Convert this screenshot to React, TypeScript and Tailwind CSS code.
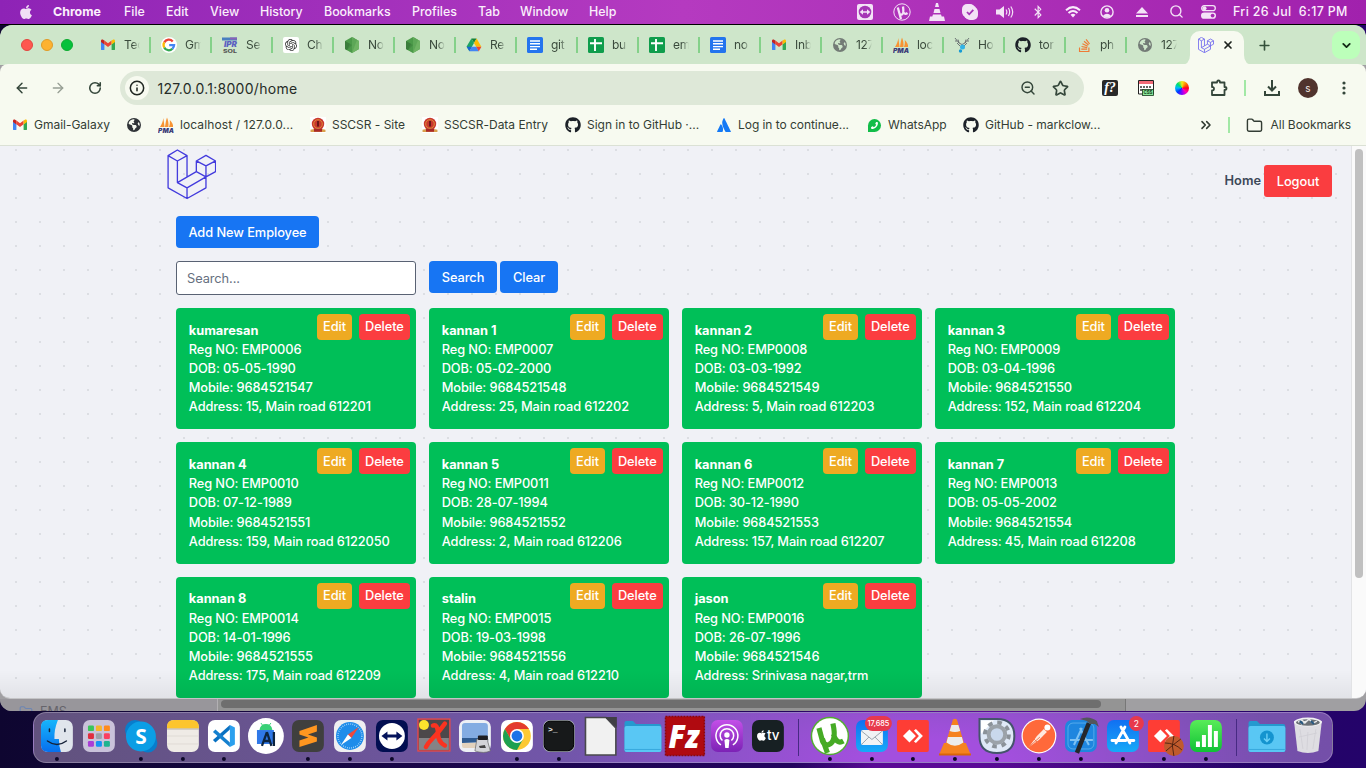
import React from "react";
import {
  FaApple,
  FaBluetoothB,
  FaGithub,
  FaPhoneAlt,
  FaStackOverflow,
  FaAtlassian,
} from "react-icons/fa";
import { FaEarthAmericas } from "react-icons/fa6";
import { SiOpenai } from "react-icons/si";
import {
  ArrowLeft,
  ArrowRight,
  RotateCw,
  Info,
  ZoomOut,
  Star,
  ChevronDown,
  Plus,
  X,
  ChevronsRight,
  Folder,
  Search,
} from "lucide-react";

/* ---------- shared glyphs ---------- */

const Laravel = ({ className, sw = 3 }: { className: string; sw?: number }) => (
  <svg viewBox="500 26 149 152" className={className} fill="none" stroke="currentColor" strokeWidth={sw} strokeLinejoin="round">
    <path d="M503 46 531 29 560 46 531 62ZM503 46V143L560 175 617 143V110M531 62V127L560 143V175M560 46V110M531 127 588 94 617 110 560 143M588 62 617 45 646 62 617 77ZM588 62V94M646 62V94L617 110V77" />
  </svg>
);

const Gmail = () => (
  <svg viewBox="0 0 16 16" className="size-4">
    <path d="M1 4.2V12.2a.9.9 0 0 0 .9.9H4.4V7Z" fill="#4285f4" />
    <path d="M15 4.2V12.2a.9.9 0 0 1-.9.9H11.6V7Z" fill="#34a853" />
    <path d="M4.4 7.3V3.6L8 6.3 11.6 3.6V7.3L8 10Z" fill="#ea4335" />
    <path d="M1 5V4C1 2.7 2.4 2.2 3.4 2.9L4.4 3.6V7.4Z" fill="#c5221f" />
    <path d="M15 5V4C15 2.7 13.6 2.2 12.6 2.9L11.6 3.6V7.4Z" fill="#fbbc04" />
  </svg>
);

const Google = () => (
  <svg viewBox="0 0 16 16" className="size-4">
    <circle cx="8" cy="8" r="8" fill="#fff" />
    <g fill="none" strokeWidth="2.3">
      <path d="M3.300 5.400A5.100 5.100 0 0 1 11.700 4.500" stroke="#ea4335" />
      <path d="M3.300 5.400A5.100 5.100 0 0 0 3.300 10.600" stroke="#fbbc05" />
      <path d="M3.300 10.600A5.100 5.100 0 0 0 11.400 11.800" stroke="#34a853" />
      <path d="M11.400 11.800A5.100 5.100 0 0 0 13.100 8.100H8.200" stroke="#4285f4" />
    </g>
  </svg>
);

const Ipr = () => (
  <svg viewBox="0 0 16 16" className="size-4">
    <rect y=".5" width="15" height="3" fill="#4a7fc0" />
    <rect x="8" y=".5" width="7" height="2" fill="#8b62b5" />
    <text x="2" y="10.300" fontSize="7.500" fontWeight="900" fontStyle="italic" fill="#5a5fc0" fontFamily="Inter" textLength="13" lengthAdjust="spacingAndGlyphs">IPR</text>
    <text x="1" y="15.500" fontSize="5" fontWeight="800" fill="#555" fontFamily="Inter" textLength="14" lengthAdjust="spacingAndGlyphs">SOL</text>
  </svg>
);

const Chat = () => (
  <span className="flex size-4 items-center justify-center rounded-[2px] bg-white">
    <SiOpenai size={12} color="#333" />
  </span>
);

const Node = () => (
  <svg viewBox="0 0 16 16" className="size-4">
    <path d="M8 0 15 4V12L8 16 1 12V4Z" fill="#4c9b4a" />
    <path d="M8 0 15 4V12L8 16Z" fill="#6fb464" />
    <path d="M1 4 8 8 3 13.2 1 12Z" fill="#3a7d3b" />
    <path d="M9 0.6 3 13 8 16 13 3Z" fill="#4c9a4a" opacity=".5" />
  </svg>
);

const Drive = () => (
  <svg viewBox="0 0 16 16" className="size-4">
    <path d="M5.4 1.4H10.6L8 6Z" fill="#188038" />
    <path d="M5.4 1.4 8 6 3.4 14.2.6 9.6Z" fill="#1ea362" />
    <path d="M10.6 1.4 15.4 9.8H10.2L8 6Z" fill="#fbbc04" />
    <path d="M.6 9.8H5.8L3.4 14.2Z" fill="#1967d2" />
    <path d="M5.8 9.8H10.3L12.8 14.2H3.4Z" fill="#4285f4" />
    <path d="M10.2 9.8H15.4L12.8 14.2Z" fill="#ea4335" />
  </svg>
);

const Docs = () => (
  <svg viewBox="0 0 16 16" className="size-4">
    <rect width="16" height="16" rx="1.6" fill="#2374ee" />
    <path d="M3 4H13M3 6.8H13M3 9.6H13M3 12.3H10" stroke="#fff" strokeWidth="1.4" />
  </svg>
);

const Sheets = () => (
  <svg viewBox="0 0 16 16" className="size-4">
    <rect width="16" height="16" rx="1.6" fill="#0f9d4c" />
    <path d="M2 6.3H14M7 2V14" stroke="#fff" strokeWidth="1.9" />
  </svg>
);

const Pma = () => (
  <svg viewBox="0 0 16 16" className="size-4">
    <path d="M2 10C4 7 5 4 5.3 1L6.6 10ZM7 10C7.6 6 8 3 9 .5 10 3 11 7 10.4 10ZM11 10C12 7 12 5 11.8 3 14 5 15.5 8 15 10Z" fill="#f79433" />
    <text x="0" y="15.6" fontSize="5.800" fontWeight="900" fontStyle="italic" fill="#3c3c78" fontFamily="Inter" textLength="16" lengthAdjust="spacingAndGlyphs">PMA</text>
  </svg>
);

const Globe = ({ dark = false }: { dark?: boolean }) => <FaEarthAmericas size={14} color={dark ? "#303438" : "#737b76"} />;

const Antlers = () => (
  <svg viewBox="0 0 16 16" className="size-4" fill="none">
    <path d="M1 1 5 6 8 7.500 11 6 15 1M3 4 1 4M13 4 15 4M5 6 4 2.500M11 6 12 2.500M3 6 6 9M13 6 10 9" stroke="#62676b" strokeWidth=".9" />
    <circle cx="8.500" cy="10" r="2.500" fill="#32b4e6" />
    <circle cx="6.500" cy="14" r="1.700" fill="#189bd4" />
  </svg>
);

const Badge = () => (
  <svg viewBox="0 0 16 16" className="size-4">
    <rect width="16" height="16" fill="#fff" />
    <circle cx="8" cy="7" r="6.2" fill="#c9382f" />
    <circle cx="8" cy="7" r="4.300" fill="none" stroke="#dd8a35" strokeWidth="1" />
    <path d="M8 4V9.500" stroke="#6b1818" strokeWidth="2" />
    <path d="M.5 12.8 8 11.3 15.500 12.8V15H.5Z" fill="#d9a04a" />
    <path d="M4 11.8H12V14.8H4Z" fill="#a82828" />
  </svg>
);

/* ---------- menu bar ---------- */

const menus: [string, string][] = [
  ["Chrome", "w-[71px] font-bold"],
  ["File", "w-[42px]"],
  ["Edit", "w-[44px]"],
  ["View", "w-[50px]"],
  ["History", "w-[64px]"],
  ["Bookmarks", "w-[88px]"],
  ["Profiles", "w-[66px]"],
  ["Tab", "w-[42px]"],
  ["Window", "w-[69px]"],
  ["Help", "w-[60px]"],
];

const Cone = () => (
  <svg viewBox="0 0 16 18" className="h-[18px] w-4" fill="#f3e3f6">
    <path d="M7 0H9L10 4H6ZM5.5 6H10.5L11.5 10H4.500ZM4 11.5H12L12.7 13.500H15L16 18H0L1 13.500H3.300Z" />
  </svg>
);

const MenuBar = () => (
  <header className="flex h-6 shrink-0 items-center bg-linear-to-r from-[#8e23b6] via-[#b53ac0] to-[#a121ad] text-[12.4px] font-medium text-[#fbeffc]">
    <div className="flex w-[53px] justify-center pr-px">
      <FaApple size={16} color="#f1e0f5" />
    </div>
    {menus.map(([m, w]) => (
      <span key={m} className={"shrink-0 whitespace-nowrap " + w}>{m}</span>
    ))}
    <div className="ml-auto flex items-center">
      <div className="flex w-[37px] justify-center">
        <svg viewBox="0 0 16 16" className="size-4"><rect width="16" height="16" rx="2" fill="#f3e3f6" /><circle cx="8" cy="8" r="6.300" fill="#a535b5" /><path d="M2.700 8 6 5.300V7.200H10V5.300L13.300 8 10 10.700V8.800H6V10.700Z" fill="#f3e3f6" /></svg>
      </div>
      <div className="flex w-[37px] justify-center">
        <svg viewBox="0 0 18 18" className="size-[18px]"><circle cx="9" cy="9" r="8.200" fill="none" stroke="#f3e3f6" strokeWidth="1" /><path d="M4.800 4.500 6.300 10Q6.800 12.300 9 11.500 11 10.500 10 3.500M10.500 9.500Q12 12 14.500 10M6.300 10 8 16" fill="none" stroke="#f3e3f6" strokeWidth="2.300" /></svg>
      </div>
      <div className="flex w-[34px] justify-center"><Cone /></div>
      <div className="flex w-[32px] justify-center">
        <svg viewBox="0 0 16 16" className="size-4"><rect width="13" height="13" rx="5" fill="#f3e3f6" /><rect x="3" y="3" width="13" height="13" rx="5" fill="#f3e3f6" /><circle cx="8" cy="8" r="7.300" fill="#f3e3f6" /><path d="M5 8 7.200 10.300 11.300 5.800" fill="none" stroke="#a535b5" strokeWidth="1.800" /></svg>
      </div>
      <div className="flex w-[36px] justify-center pl-[2px]">
        <svg viewBox="0 0 18 14" className="h-[14px] w-[18px]"><path d="M0 4.500H3.500L8 1V13L3.500 9.500H0Z" fill="#f3e3f6" /><path d="M10 4.500Q11.700 7 10 9.500M12.400 3Q15 7 12.400 11M14.800 1.500Q18.600 7 14.800 12.500" fill="none" stroke="#f3e3f6" strokeWidth="1.200" /></svg>
      </div>
      <div className="flex w-[31px] justify-center"><FaBluetoothB size={14} color="#f3e3f6" /></div>
      <div className="flex w-[39px] justify-center">
        <svg viewBox="0 0 16 12" className="h-3 w-4" fill="none" stroke="#f9ecfb" strokeWidth="2"><path d="M1 4.300Q8-2 15 4.300M3.500 7Q8 3 12.500 7" /><path d="M5.500 8.700Q8 6.800 10.500 8.700L8 11.500Z" fill="#f9ecfb" stroke="none" /></svg>
      </div>
      <div className="flex w-[29px] justify-center">
        <svg viewBox="0 0 14 14" className="size-[14px]"><circle cx="7" cy="7" r="6.100" fill="none" stroke="#f3e3f6" strokeWidth="1.400" /><circle cx="7" cy="5.300" r="2.300" fill="#f3e3f6" /><path d="M2.800 11Q7 6.500 11.200 11 7 14.500 2.800 11Z" fill="#f3e3f6" /></svg>
      </div>
      <div className="flex w-[41px] justify-center">
        <svg viewBox="0 0 12 12" className="size-3" fill="#f3e3f6"><path d="M6 1 12 7.500H0ZM0 9H12V11H0Z" /></svg>
      </div>
      <div className="flex w-[29px] justify-center"><Search size={15} color="#f3e3f6" strokeWidth={2.2} /></div>
      <div className="flex w-[34px] justify-center">
        <svg viewBox="0 0 15 14" className="h-[14px] w-[15px]"><rect x=".7" y=".7" width="13.600" height="5" rx="2.500" fill="none" stroke="#f3e3f6" strokeWidth="1.300" /><circle cx="3.500" cy="3.200" r="2" fill="#f3e3f6" /><rect y="7.500" width="15" height="6.300" rx="3.100" fill="#f3e3f6" /><circle cx="11.600" cy="10.600" r="1.900" fill="#a829b2" /></svg>
      </div>
      <div className="w-[141px] pl-[8px] tracking-[0.370px] whitespace-pre">Fri 26 Jul  6:17 PM</div>
    </div>
  </header>
);

/* ---------- browser chrome ---------- */

const tabs: [React.ReactNode, string][] = [
  [<Gmail />, "Tec"],
  [<Google />, "Gm"],
  [<Ipr />, "Se"],
  [<Chat />, "Ch"],
  [<Node />, "No"],
  [<Node />, "No"],
  [<Drive />, "Re"],
  [<Docs />, "git"],
  [<Sheets />, "bu"],
  [<Sheets />, "em"],
  [<Docs />, "no"],
  [<Gmail />, "Inb"],
  [<Globe />, "127"],
  [<Pma />, "loc"],
  [<Antlers />, "Ho"],
  [<FaGithub size={16} color="#1c2128" />, "tor"],
  [<FaStackOverflow size={15} color="#ef7b35" />, "ph"],
  [<Globe />, "127"],
];

const TabStrip = () => (
  <div className="flex h-10 shrink-0 items-stretch bg-[#cee6ca]">
    <div className="flex w-[90px] shrink-0 items-center gap-2 pl-[21px]">
      <i className="size-3 rounded-full border border-[#e2463f] bg-[#fe5750]" />
      <i className="size-3 rounded-full border border-[#e09b28] bg-[#fdb231]" />
      <i className="size-3 rounded-full border border-[#0dab30] bg-[#05c13c]" />
    </div>
    {tabs.map(([icon, label], i) => (
      <div key={i} className="flex w-[61px] shrink-0 items-center pl-[10px]">
        <span className="flex size-4 shrink-0 items-center justify-center">{icon}</span>
        <span className="ml-2 w-[16px] shrink-0 overflow-hidden mask-r-from-55% text-[12px] tracking-[-0.300px] whitespace-nowrap text-[#3a4a3c]">{label}</span>
        {i < 17 && <span className="ml-auto h-4 w-[2px] bg-[#84d189]" />}
      </div>
    ))}
    <div className="relative mt-[6px] ml-[2px] flex w-[54px] shrink-0 items-center rounded-t-[10px] bg-[#f7faf0] pb-[6px] pl-[8px]">
      <svg viewBox="0 0 10 10" className="absolute bottom-0 -left-[10px] size-[10px]"><path d="M10 0V10H0Q10 10 10 0Z" fill="#f7faf0" /></svg>
      <svg viewBox="0 0 10 10" className="absolute -right-[10px] bottom-0 size-[10px]"><path d="M0 0V10H10Q0 10 0 0Z" fill="#f7faf0" /></svg>
      <Laravel className="size-4 text-[#6f68ee]" sw={8} />
      <X size={12} strokeWidth={3.4} className="ml-[8px] text-[#1e231e]" />
    </div>
    <div className="flex w-[40px] items-center justify-center"><Plus size={15} strokeWidth={2.6} className="text-[#34513a]" /></div>
    <div className="mt-[6px] mr-[6px] ml-auto flex size-7 items-center justify-center rounded-[9px] bg-[#bcffba]">
      <ChevronDown size={13} strokeWidth={3.4} className="text-[#132a16]" />
    </div>
  </div>
);

const Toolbar = () => (
  <div className="-mt-px flex h-[46px] shrink-0 items-center rounded-t-[8px] bg-[#f7faf0] pt-[2px] text-[#34463a]">
    <div className="flex w-[44px] shrink-0 justify-center"><ArrowLeft size={16} strokeWidth={2.2} /></div>
    <div className="flex w-[28px] shrink-0 justify-center"><ArrowRight size={16} strokeWidth={2} className="text-[#979f94]" /></div>
    <div className="flex w-[45px] shrink-0 justify-center"><RotateCw size={14} strokeWidth={2.7} /></div>
    <div className="ml-[3px] flex h-[34px] w-[964px] shrink-0 items-center rounded-full bg-[#dee8d8]">
      <span className="ml-[5px] flex size-6 items-center justify-center rounded-full bg-[#f7faf0]"><Info size={16} strokeWidth={2.3} className="text-[#202722]" /></span>
      <span className="ml-[8.500px] text-[14px] tracking-[0.280px] text-[#262c27]">127.0.0.1:8000/home</span>
      <ZoomOut size={16} strokeWidth={2.2} className="mr-[16px] ml-auto" />
      <Star size={17} strokeWidth={2.4} className="mr-[15px]" />
    </div>
    <div className="flex w-[52px] shrink-0 justify-center">
      <span className="flex size-4 items-center justify-center rounded-[2px] bg-[#292929] font-['Liberation_Serif',serif] text-[14px] leading-none font-bold text-white italic">f?</span>
    </div>
    <div className="flex w-[20px] shrink-0 justify-center">
      <svg viewBox="0 0 16 16" className="size-4"><path d="M.5.5H15.500V14H.5Z" fill="#fff" stroke="#222" /><path d="M1 1H15V4H1Z" fill="#f16b78" /><path d="M2 7H14M2 10H6" stroke="#333" strokeWidth="1.600" strokeDasharray="2 1" /><rect x="4.500" y="9.500" width="11" height="6" fill="#8be79a" stroke="#173b1d" strokeWidth=".8" /><text x="5.500" y="14.400" fontSize="5" fontWeight="700" fontFamily="Inter" textLength="9" lengthAdjust="spacingAndGlyphs" fill="#12401c">CSS</text></svg>
    </div>
    <div className="flex w-[52px] shrink-0 justify-center">
      <span className="size-[14px] rounded-full bg-[conic-gradient(#f6ea1a,#ff7a00,#ff0018,#ff00bb,#8b00ff,#0038ff,#00b8ff,#00e06a,#f6ea1a)]" />
    </div>
    <div className="flex w-[22px] shrink-0 justify-center">
      <svg viewBox="0 0 18 18" className="size-[18px]" fill="none" stroke="currentColor" strokeWidth="1.800" strokeLinejoin="round"><path d="M2 3.500H7Q7 1.500 8.500 1.500T10 3.500H14.500V8Q16.500 8 16.500 9.500T14.500 11V16H2V11.500Q4 11.500 4 9.700T2 8Z" /></svg>
    </div>
    <span className="ml-[14px] h-4 w-[2px] shrink-0 bg-[#a2e8a5]" />
    <div className="flex w-[52px] shrink-0 justify-center">
      <svg viewBox="0 0 16 16" className="size-4" fill="none" stroke="currentColor" strokeWidth="2"><path d="M8 0V10M4 6.500 8 10.500 12 6.500M1 11V15H15V11" /></svg>
    </div>
    <span className="flex size-5 shrink-0 items-center justify-center rounded-full bg-[#50332d] text-[10px] text-[#f4e9e4]">s</span>
    <div className="flex w-[48px] shrink-0 justify-center pl-[4px]">
      <svg viewBox="0 0 4 16" className="h-4 w-1" fill="currentColor"><circle cx="2" cy="3" r="1.600" /><circle cx="2" cy="8" r="1.600" /><circle cx="2" cy="13" r="1.600" /></svg>
    </div>
  </div>
);

const bookmarks: [React.ReactNode, string, string][] = [
  [<Gmail />, "Gmail-Galaxy", "w-[114px]"],
  [<Globe dark />, "", "w-[32px]"],
  [<Pma />, "localhost / 127.0.0...", "w-[152px] tracking-[0.100px]"],
  [<Badge />, "SSCSR - Site", "w-[112px]"],
  [<Badge />, "SSCSR-Data Entry", "w-[143px]"],
  [<FaGithub size={16} color="#1c2128" />, "Sign in to GitHub ·...", "w-[151px]"],
  [<FaAtlassian size={14} color="#1479f5" />, "Log in to continue...", "w-[150px] tracking-[-0.050px]"],
  [<span className="flex size-[13px] items-center justify-center rounded-full rounded-bl-[3px] bg-[#12bd49]"><FaPhoneAlt size={7} color="#fff" className="-scale-x-100" /></span>, "WhatsApp", "w-[97px]"],
  [<FaGithub size={16} color="#1c2128" />, "GitHub - markclow...", "w-[160px]"],
];

const BookmarkBar = () => (
  <div className="flex h-[36px] shrink-0 items-center border-b border-[#dbe1d5] bg-[#f7faf0] pb-[5px] pl-3 text-[12px] tracking-[-0.020px] text-[#333d34]">
    {bookmarks.map(([icon, label, w], i) => (
      <div key={i} className={"flex shrink-0 items-center whitespace-nowrap " + w}>
        <span className="flex size-4 shrink-0 items-center justify-center">{icon}</span>
        <span className="ml-[6px]">{label}</span>
      </div>
    ))}
    <div className="ml-auto flex items-center pr-[15px]">
      <ChevronsRight size={16} strokeWidth={2.4} />
      <span className="ml-[14px] h-4 w-[2px] bg-[#a2e8a5]" />
      <Folder size={17} strokeWidth={2} className="ml-[16px]" />
      <span className="ml-[8px] tracking-[-0.060px]">All Bookmarks</span>
    </div>
  </div>
);

/* ---------- page ---------- */

const employees = [
  ["kumaresan", "EMP0006", "05-05-1990", "9684521547", "15, Main road 612201"],
  ["kannan 1", "EMP0007", "05-02-2000", "9684521548", "25, Main road 612202"],
  ["kannan 2", "EMP0008", "03-03-1992", "9684521549", "5, Main road 612203"],
  ["kannan 3", "EMP0009", "03-04-1996", "9684521550", "152, Main road 612204"],
  ["kannan 4", "EMP0010", "07-12-1989", "9684521551", "159, Main road 6122050"],
  ["kannan 5", "EMP0011", "28-07-1994", "9684521552", "2, Main road 612206"],
  ["kannan 6", "EMP0012", "30-12-1990", "9684521553", "157, Main road 612207"],
  ["kannan 7", "EMP0013", "05-05-2002", "9684521554", "45, Main road 612208"],
  ["kannan 8", "EMP0014", "14-01-1996", "9684521555", "175, Main road 612209"],
  ["stalin", "EMP0015", "19-03-1998", "9684521556", "4, Main road 612210"],
  ["jason", "EMP0016", "26-07-1996", "9684521546", "Srinivasa nagar,trm"],
];

const Card = ({ e }: { e: string[] }) => (
  <article className="relative rounded-[4px] bg-[#00bf58] p-[12.8px] font-medium tracking-[-0.110px] text-white">
    <div className="absolute top-[6px] right-[6.300px] flex gap-[6.800px] tracking-[-0.080px]">
      <button className="h-[26px] rounded-[4px] bg-[#eeaa22] px-[6.100px]">Edit</button>
      <button className="h-[26px] rounded-[4px] bg-[#fb3d40] px-[6.100px]">Delete</button>
    </div>
    <h2 className="font-bold tracking-normal">{e[0]}</h2>
    <p>Reg NO: {e[1]}</p>
    <p>DOB: {e[2]}</p>
    <p>Mobile: {e[3]}</p>
    <p>Address: {e[4]}</p>
  </article>
);

const Page = () => (
  <div className="flex min-h-0 flex-1 bg-[#f0f1f6] text-[12.800px] leading-[19.200px]">
    <main className="relative flex w-[1351px] shrink-0 flex-col bg-[conic-gradient(from_270deg_at_2px_2px,#dcdee3_90deg,transparent_0)] bg-size-[24px_24px] bg-position-[15px_3px]">
      <div className="flex h-[70px] shrink-0 items-start justify-between pr-[19px] pl-[166.600px]">
        <Laravel className="mt-[3px] h-[50.500px] w-[49.700px] text-[#433bdd]" sw={4} />
        <nav className="mt-[19px] flex gap-[3px]">
          <a className="mt-[6px] font-semibold text-[#3c4858]">Home</a>
          <button className="h-8 w-[68px] rounded-[3px] bg-[#fa3d40] pt-px font-medium text-white">Logout</button>
        </nav>
      </div>
      <div className="mx-[176px] flex flex-1 flex-col">
        <button className="h-8 w-[143px] shrink-0 rounded-[4px] bg-[#1775f3] pt-px font-medium tracking-[-0.060px] text-white">Add New Employee</button>
        <div className="mt-[13px] flex items-start">
          <div className="flex h-[34px] w-[240px] items-center rounded-[3px] border border-[#596273] bg-white pt-px pl-[10px] tracking-[-0.060px] text-[#667080]">Search...</div>
          <button className="ml-[13px] h-8 w-[68px] rounded-[4px] bg-[#1775f3] pt-px font-medium tracking-[-0.060px] text-white">Search</button>
          <button className="ml-[3px] h-8 w-[58px] rounded-[4px] bg-[#1775f3] pt-px font-medium tracking-[-0.060px] text-white">Clear</button>
        </div>
        <div className="mt-[12.800px] grid grid-cols-4 gap-[12.800px]">
          {employees.map((e) => <Card key={e[1]} e={e} />)}
        </div>
      </div>
      <div className="pointer-events-none absolute inset-x-0 bottom-0 h-7 bg-linear-to-b from-transparent to-black/6" />
    </main>
    <div className="flex w-[15px] shrink-0 justify-center border-l border-[#e2e3e5] bg-[#fafafa] pt-[3px]">
      <div className="h-[429px] w-2 rounded-full bg-[#c0c0c0]" />
    </div>
  </div>
);

/* ---------- dock ---------- */

const Tile = ({ fill, children }: { fill: string; children?: React.ReactNode }) => (
  <>
    <rect x="5" y="8" width="32" height="32" rx="7" fill={fill} />
    {children}
  </>
);

const FolderShape = () => (
  <>
    <path d="M2.500 11Q2.500 9 4.500 9H11L14 12H37Q39.500 12 39.500 14V38Q39.500 40 37.500 40H4.500Q2.500 40 2.500 38Z" fill="#2599cf" />
    <rect x="2.500" y="14" width="37" height="26" rx="2" fill="#59c7f4" />
    <path d="M3 37.500H39" stroke="#38a9de" />
  </>
);

const Anydesk = () => (
  <>
    <rect x="5" y="8" width="32" height="32" rx="2" fill="#fe3d35" />
    <path d="M17.500 17.500 24 24 17.500 30.500 11 24Z" fill="#fff" />
    <path d="M22 18.500 24 17 31 24 24 31 22 29.500 27 24Z" fill="#fff" />
  </>
);

const ConeBig = () => (
  <>
    <path d="M10 31H32L37 43H5Z" fill="#f58220" />
    <path d="M19 7.500Q21 6 23 7.500L31 34Q21 38 11 34Z" fill="#f58220" />
    <path d="M17.500 13H24.500L26.300 19Q21 21 15.700 19ZM14 25H28L29.500 30.500Q21 37 12.500 30.500Z" fill="#ececec" />
    <path d="M5 41.500H37V43.500H5Z" fill="#d96408" />
  </>
);

type Item = { d?: boolean; n: React.ReactNode };

const left: Item[] = [
  { d: true, n: <Tile fill="#e0e5ec"><path d="M12 8H22Q18 18 18.500 27H23Q23 34 25 40H12Q5 40 5 33V15Q5 8 12 8Z" fill="url(#fb)" /><path d="M13.500 17V19.500M29 17V19.500M11.500 29Q21 36 30.500 29" stroke="#162238" strokeWidth="1.500" fill="none" strokeLinecap="round" /></Tile> },
  { n: <Tile fill="#c9c2da">{["#39c65b", "#f6b52c", "#ff8a1e", "#e02d3e", "#9ba1ab", "#fb3e61", "#a93dd6", "#1593f2", "#1fb48f"].map((c, i) => <rect key={c} x={10 + (i % 3) * 8} y={13.500 + Math.floor(i / 3) * 7.800} width="6" height="5.600" rx="1.200" fill={c} />)}</Tile> },
  { d: true, n: <><circle cx="15" cy="18" r="10" fill="#087dcc" /><circle cx="28" cy="31" r="9.500" fill="#087dcc" /><circle cx="21" cy="24.500" r="15" fill="#0b9ee5" /><text x="21" y="32" textAnchor="middle" fontSize="21" fontWeight="700" fill="#fff" fontFamily="Open Sans">S</text></> },
  { d: true, n: <Tile fill="#efebe6"><path d="M5 16.500V15Q5 8 12 8H30Q37 8 37 15V16.500Z" fill="#fcc52d" /><path d="M5 17H37" stroke="#b9b3a8" strokeWidth="1" /><path d="M5 24H37M5 32H37" stroke="#dcd7d0" strokeWidth=".8" /></Tile> },
  { d: true, n: <Tile fill="#fff"><path d="M27 13 32 15.500V32.500L27 35Z" fill="#2ba0ee" /><path d="M27 17.500V13L10 28 12.500 30.500Z" fill="#0871c2" /><path d="M27 30.500V35L10 20 12.500 17.500Z" fill="#1580cf" /></Tile> },
  { n: <><circle cx="21" cy="24" r="18" fill="#fff" /><path d="M14.500 18Q15.500 12 21 12T27.500 18Z" fill="#38d176" /><path d="M16 11 17.500 13M26 11 24.500 13" stroke="#38d176" /><rect x="12" y="18" width="17" height="14" fill="#2f78e8" /><path d="M22 20 17 34M22 20 26.500 34M18.500 29H26M29 20V34" stroke="#0c2440" strokeWidth="2.300" /></> },
  { d: true, n: <Tile fill="#3f3f3e"><path d="M12.500 19 30 13V19.500L21 22.500 30 25.500V29.500L12.500 35V28.500L21.500 25.500 12.500 22.500Z" fill="#ff9620" /></Tile> },
  { d: true, n: <Tile fill="#efeff1"><circle cx="21" cy="24" r="14" fill="#1f8dea" /><circle cx="21" cy="24" r="12" fill="none" stroke="#bfe2fb" strokeWidth="1.500" strokeDasharray=".7 1.400" /><path d="M30 15 22.500 26 19 22.500Z" fill="#f0483d" /><path d="M12 33 19 22.500 22.500 26Z" fill="#fff" /></Tile> },
  { d: true, n: <Tile fill="#020e51"><circle cx="21" cy="24" r="13" fill="#fff" /><path d="M10.500 24 16.500 19.500V22.600H25.500V19.500L31.500 24 25.500 28.500V25.400H16.500V28.500Z" fill="#04135c" /></Tile> },
  { n: <><rect x="5" y="7" width="32" height="32" fill="#4c484a" stroke="#e8494a" strokeWidth="1.400" /><path d="M6 26H36V38H6Z" fill="#858386" /><circle cx="11" cy="13" r="5" fill="#fde32c" /><path d="M20 13.500Q25 12 25 21T32 33.500M32 11.500Q25 21 20 26T13 35" stroke="#fa3320" strokeWidth="4.500" fill="none" strokeLinecap="round" /></> },
  { n: <Tile fill="#edf0f5"><path d="M8 14Q8 11 11 11H31Q34 11 34 14V26H8Z" fill="#83ace2" /><path d="M8 26H34V30L8 31Z" fill="#2e5b91" /><path d="M8 31H24V36H10Q8 36 8 34Z" fill="#e2d2bd" /><path d="M23 27H34V30L36.500 39Q30 42 21 39Z" fill="#d3d4d8" stroke="#666" strokeWidth=".7" /><rect x="24" y="23.500" width="10" height="4.500" rx="1" fill="#1e1e22" /><path d="M25 34 31 33 32 36 26 36Z" fill="#444" /></Tile> },
  { d: true, n: <Tile fill="#fff"><circle cx="21" cy="24" r="14" fill="#fcc934" /><path d="M21 17H33.100A14 14 0 0 0 8.900 17L15 27.500Z" fill="#e33b2e" /><path d="M8.900 17A14 14 0 0 0 21 38L27 27.500H15Z" fill="#1da051" /><circle cx="21" cy="24" r="7" fill="#fff" /><circle cx="21" cy="24" r="5.400" fill="#1a73e8" /></Tile> },
  { d: true, n: <Tile fill="#9aa1a6"><rect x="6.200" y="9.200" width="29.600" height="29.600" rx="6" fill="#17191a" stroke="#000" /><text x="10" y="20" fontSize="8" fontWeight="700" fill="#eee" fontFamily="Liberation Mono">&gt;_</text></Tile> },
  { n: <><path d="M5.500 5.500H26L36 16V43H5.500Z" fill="#f1f1f1" stroke="#49494c" strokeWidth="1.600" /><path d="M25 5H37V16Z" fill="#403f45" /></> },
  { n: <FolderShape /> },
  { n: <><rect x="1.500" y="4.500" width="39" height="39" fill="#b00a10" stroke="#8b070b" strokeWidth="1.500" strokeDasharray="2 1" /><text x="20" y="36" textAnchor="middle" fontSize="32" fontWeight="800" fontStyle="italic" fill="#fff" fontFamily="Open Sans" textLength="31" lengthAdjust="spacingAndGlyphs">Fz</text></> },
  { n: <Tile fill="url(#pod)"><g fill="none" stroke="#fff" strokeWidth="1.500"><path d="M15 33A11 11 0 1 1 27 33" /><path d="M16.500 28.500A6.800 6.800 0 1 1 25.500 28.500" /></g><circle cx="21" cy="23" r="2.700" fill="#fff" /><path d="M18.500 28Q21 26 23.500 28L22.700 36H19.300Z" fill="#fff" /></Tile> },
  { n: <Tile fill="#172023"><FaApple x="8.500" y="17.500" size={12} color="#fff" /><text x="20" y="28.500" fontSize="13.500" fontWeight="500" fill="#fff" fontFamily="Inter">tv</text></Tile> },
];

const middle: Item[] = [
  { d: true, n: <><circle cx="21" cy="24" r="19.300" fill="#53ae31" /><circle cx="21" cy="24" r="17.800" fill="#fff" /><path d="M10 16 13.500 29Q15.500 34 20 32.500 28 29.500 24 11.500M24.500 22Q27.500 33 34.500 29M13.500 27 18.500 41" stroke="#46ab25" strokeWidth="5.200" fill="none" /></> },
  { d: true, n: <Tile fill="url(#mail)"><rect x="10" y="18" width="22" height="15" rx="2" fill="#f1f3f5" /><path d="M10.500 19 21 27.500 31.500 19M10.500 32.500 18 25M31.500 32.500 24 25" stroke="#9ba5ad" fill="none" /><rect x="14" y="4" width="27" height="15" rx="7.500" fill="#e8394c" /><text x="27.500" y="14" textAnchor="middle" fontSize="7.300" fontWeight="500" fill="#fff" fontFamily="Inter">17,685</text></Tile> },
  { d: true, n: <Anydesk /> },
  { d: true, n: <ConeBig /> },
  { d: true, n: <><path d="M3.500 7H21Q38.500 7 38.500 24T21 41 3.500 24Z" fill="#dfe9f7" stroke="#44546b" strokeWidth="2" /><path d="M5 8.500H18L5 22Z" fill="#fff" /><circle cx="21" cy="22.500" r="12" fill="none" stroke="#8b9299" strokeWidth="4" strokeDasharray="4.600 4.820" /><circle cx="21" cy="22.500" r="8.300" fill="#c9d8ec" stroke="#9ba2a9" strokeWidth="4" /></> },
  { d: true, n: <><circle cx="21" cy="24" r="17.500" fill="#fff" /><circle cx="21" cy="24" r="16.300" fill="#ff693a" /><path d="M11 35 19 24 26 17 29 20 21 28Z" fill="#ffe9df" /><circle cx="29.500" cy="15.500" r="3" fill="#fff" /><path d="M11 35 22 25M16 27 20 31" stroke="#ef7c55" /></> },
  { d: true, n: <Tile fill="#1e86df"><rect x="8" y="11" width="26" height="26" rx="5" fill="none" stroke="#63b4ef" strokeWidth=".8" /><path d="M14 33 22 16M29 33 20 16M10 28H33" stroke="#7dc2f3" strokeWidth="2" fill="none" /><path d="M29 11 17 41" stroke="#25272b" strokeWidth="4.500" /><path d="M20 7Q29 3 37 9L39 15 35 12 30 12 27 9Z" fill="#53565c" /></Tile> },
  { d: true, n: <Tile fill="url(#mail)"><path d="M19 15 28 31M23 15 14 31M10 28.500H24M27 28.500H32" stroke="#fff" strokeWidth="2.800" strokeLinecap="round" /><circle cx="34.500" cy="11.500" r="7.500" fill="#e8394c" /><text x="34.500" y="14.500" textAnchor="middle" fontSize="8.500" fill="#fff" fontFamily="Inter">2</text></Tile> },
  { d: true, n: <><Anydesk /><circle cx="31" cy="34" r="10" fill="#c05a2c" /><path d="M22 31Q32 31 39 38M31 24Q28 34 31 44M23 39Q31 32 38 27" stroke="#4a1f10" strokeWidth=".9" fill="none" /></> },
  { d: true, n: <Tile fill="url(#num)"><path d="M13 35V29.500M19 35V23M25 35V13M31 35V19" stroke="#fff" strokeWidth="4" /></Tile> },
];

const right: Item[] = [
  { n: <><FolderShape /><circle cx="21" cy="25.500" r="7" fill="#1494cf" /><path d="M21 21.500V29M18 26.500 21 29.500 24 26.500" stroke="#6bd0f7" strokeWidth="1.400" fill="none" /></> },
  { n: <><path d="M7 9H35L31.500 39Q21 43 10.500 39Z" fill="#dedde2" /><ellipse cx="21" cy="10" rx="14" ry="4.500" fill="#f2f2f4" /><ellipse cx="21" cy="10.500" rx="12" ry="3.200" fill="#6a7076" /><path d="M11 10 15 8 18 11 22 7 26 11 30 9M14 12 19 9" stroke="#e8eaec" strokeWidth="1.500" fill="none" /><path d="M13 9 16 12M24 9 27 12" stroke="#25557e" strokeWidth="2" /><path d="M13 17 16 37M21 20 20 38M29 17 26 37M12 25 30 21" stroke="#cfced4" strokeWidth=".8" fill="none" /></> },
];

const DockGroup = ({ items }: { items: Item[] }) => (
  <>
    {items.map((it, i) => (
      <div key={i} className="w-[41.850px] shrink-0">
        <svg viewBox="0 0 42 50" className="h-[50px] w-[41.850px] overflow-visible">
          {it.n}
          {it.d && <circle cx="21" cy="47" r="2" fill="#0d0828" />}
        </svg>
      </div>
    ))}
  </>
);

const Dock = () => (
  <footer className="relative mt-[1px] ml-[33px] flex h-[51px] w-[1300px] shrink-0 items-start rounded-[13px] border border-white/25 bg-linear-to-r from-[#61527d] from-0% via-[#7656b4] via-50% to-[#744fa9] to-100% pl-[2px]">
    <div className="absolute inset-0 rounded-[12px] bg-[radial-gradient(ellipse_360px_120px_at_900px_50px,#a34fde_20%,transparent)]" />
    <div className="relative -mt-px flex">
      <svg className="absolute size-0">
        <defs>
          <linearGradient id="fb" x1="0" y1="0" x2="0" y2="1"><stop stopColor="#17b5fb" /><stop offset="1" stopColor="#076fee" /></linearGradient>
          <linearGradient id="pod" x1="0" y1="0" x2="0" y2="1"><stop stopColor="#c34fe8" /><stop offset="1" stopColor="#7c22b5" /></linearGradient>
          <linearGradient id="mail" x1="0" y1="0" x2="0" y2="1"><stop stopColor="#1170f2" /><stop offset="1" stopColor="#16aaf8" /></linearGradient>
          <linearGradient id="num" x1="0" y1="0" x2="0" y2="1"><stop stopColor="#58ec58" /><stop offset="1" stopColor="#0fc135" /></linearGradient>
        </defs>
      </svg>
      <DockGroup items={left} />
      <div className="flex w-[19.500px] shrink-0 justify-center pt-[7px]"><i className="h-[37px] w-px bg-[#472a83]" /></div>
      <DockGroup items={middle} />
      <div className="flex w-[18.500px] shrink-0 justify-center pt-[7px]"><i className="h-[37px] w-px bg-[#472a83]" /></div>
      <DockGroup items={right} />
    </div>
  </footer>
);

export default function App() {
  return (
    <div className="flex h-[768px] w-[1366px] flex-col overflow-hidden bg-linear-to-r from-[#0e0630] from-0% via-[#23045d] via-55% to-[#24036a] font-['Inter',sans-serif]">
      <MenuBar />
      <div className="h-px shrink-0 bg-black" />
      <div className="flex h-[686px] shrink-0 flex-col overflow-hidden rounded-[12px] bg-[#a09fa2]">
        <div className="flex h-[674px] shrink-0 flex-col overflow-hidden rounded-[10px] border-b border-[#c4c4c6]">
          <TabStrip />
          <Toolbar />
          <BookmarkBar />
          <Page />
        </div>
        <div className="flex h-3 items-start">
          <div className="flex h-3 w-[218px] shrink-0 items-start overflow-hidden border-r border-[#b2b0b3] bg-[#98969b] pt-[6px] pl-[19px] text-[12.500px] leading-[13px] text-[#66646b]">
            <Folder size={14} className="mr-[7px] shrink-0 text-[#6d86b3]" />EMS
          </div>
          <div className="flex h-3 w-[908px] shrink-0 border-r border-[#777] bg-[#949494] pt-px pl-[3px]">
            <div className="h-2 w-[880px] rounded-full bg-[#6e6e6e]" />
          </div>
        </div>
      </div>
      <div className="flex flex-1 flex-col bg-[linear-gradient(90deg,transparent_58%,#5a0a96_64%,#5a0a96_72%,transparent_92%)]">
        <Dock />
      </div>
    </div>
  );
}
